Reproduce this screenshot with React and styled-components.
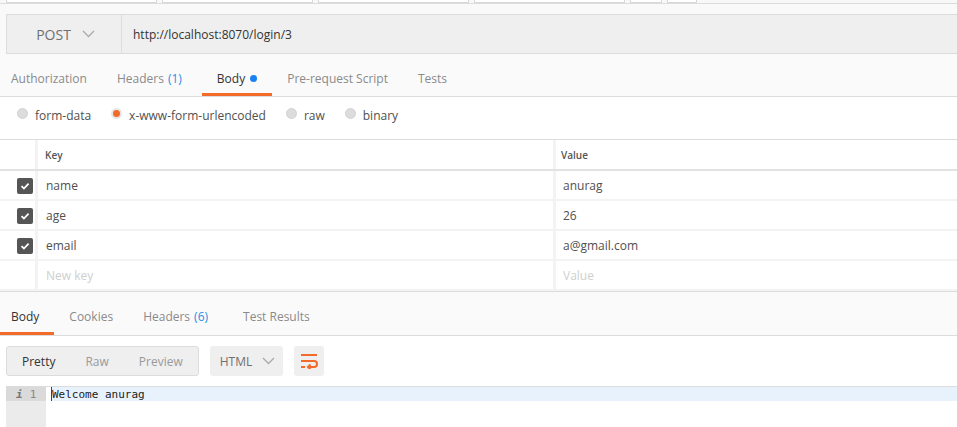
import styled, { createGlobalStyle } from "styled-components";

const GlobalStyle = createGlobalStyle`
  body {
    margin: 0;
    background: #fff;
    font-family: "Open Sans", "Liberation Sans", sans-serif;
  }
`;

const ORANGE = "#f26b2a";

const Page = styled.div`
  width: 957px;
  height: 427px;
  overflow: hidden;
  display: flex;
  flex-direction: column;
`;

const TabStrip = styled.div`
  display: flex;
  gap: 5px;
  padding-left: 6px;
  height: 3px;
  background: #f8f8f8;
  border-bottom: 1px solid #dcdcdc;
`;

const TabStub = styled.div`
  width: ${(p) => p.w}px;
  background: #fff;
  border: 1px solid #d8d8d8;
  border-top: none;
`;

const UrlArea = styled.div`
  background: #f9f9f9;
  padding: 10px 0 0 6px;
`;

const UrlBar = styled.div`
  display: flex;
  height: 38px;
  background: #efefef;
  border: 1px solid #dcdcdc;
  border-right: none;
`;

const Method = styled.div`
  width: 115px;
  display: flex;
  align-items: center;
  justify-content: center;
  gap: 11px;
  border-right: 1px solid #dcdcdc;
  font-size: 14px;
  color: #707070;
  padding-left: 3px;
  box-sizing: border-box;
`;

const UrlText = styled.div`
  display: flex;
  align-items: center;
  padding-left: 11px;
  font-size: 12px;
  color: #333;
`;

const TabRow = styled.div`
  display: flex;
  height: ${(p) => p.h}px;
  background: #fafafa;
  border-bottom: 1px solid #dcdcdc;
  border-top: ${(p) => (p.top ? "1px solid #dcdcdc" : "none")};
`;

const Tab = styled.div`
  display: flex;
  align-items: center;
  gap: 4px;
  padding: 9px 15px 0;
  margin-left: ${(p) => (p.first ? "-4px" : "0")};
  font-size: 12px;
  color: ${(p) => (p.active ? "#333" : "#8a8a8a")};
  border-bottom: 3px solid ${(p) => (p.active ? ORANGE : "transparent")};
`;

const Count = styled.span`
  color: #2b8de3;
  margin-right: 5px;
`;

const Dot = styled.span`
  width: 7px;
  height: 7px;
  border-radius: 50%;
  background: #1a82f0;
  margin-left: 1px;
`;

const RadioRow = styled.div`
  display: flex;
  align-items: center;
  gap: 20px;
  height: 36px;
  padding: 0 0 6px 17px;
  border-bottom: 1px solid #dcdcdc;
`;

const RadioItem = styled.label`
  display: flex;
  align-items: center;
  gap: 7px;
  font-size: 12px;
  color: #505050;
`;

const Radio = styled.span`
  width: 11px;
  height: 11px;
  border-radius: 50%;
  box-sizing: border-box;
  margin-top: -3px;
  background: ${(p) => (p.checked ? ORANGE : "#dcdcdc")};
  border: ${(p) => (p.checked ? "2px solid #e6e6e6" : "1px solid #d2d2d2")};
`;

const Table = styled.div`
  display: flex;
  flex-direction: column;
`;

const Row = styled.div`
  display: grid;
  grid-template-columns: 35px 515px 1fr;
  column-gap: 3px;
  height: ${(p) => (p.header ? 29 : 28)}px;
  background: #f3f3f3;
  border-bottom: ${(p) => (p.header ? "2px solid #e2e2e2" : "2px solid #f3f3f3")};
`;

const Cell = styled.div`
  background: #fff;
  display: flex;
  align-items: center;
  padding: 1px 0 0 ${(p) => p.pad || 0}px;
  font-size: ${(p) => (p.head ? 10 : 12)}px;
  font-weight: ${(p) => (p.head ? 600 : 400)};
  color: ${(p) => (p.ghost ? "#cfcfcf" : p.head ? "#555" : "#505050")};
`;

const Check = styled.span`
  width: 16px;
  height: 16px;
  margin-left: 17px;
  border-radius: 2px;
  background: #555;
  display: flex;
  align-items: center;
  justify-content: center;
`;

const Toolbar = styled.div`
  display: flex;
  gap: 11px;
  padding: 10px 6px;
  height: 30px;
`;

const Group = styled.div`
  display: flex;
  border: 1px solid #dcdcdc;
  border-radius: 3px;
  background: #efefef;
`;

const GroupBtn = styled.div`
  display: flex;
  align-items: center;
  padding: 0 15px;
  font-size: 12px;
  color: ${(p) => (p.active ? "#333" : "#9a9a9a")};
`;

const Select = styled.div`
  display: flex;
  align-items: center;
  gap: 10px;
  padding: 0 8px 0 10px;
  background: #efefef;
  border-radius: 3px;
  font-size: 12px;
  color: #707070;
`;

const IconBtn = styled.div`
  width: 30px;
  display: flex;
  align-items: center;
  justify-content: center;
  background: #efefef;
  border-radius: 3px;
`;

const Code = styled.div`
  display: flex;
  margin-left: 6px;
  border-top: 1px solid #dcdcdc;
  flex: 1;
`;

const Gutter = styled.div`
  width: 40px;
  background: #ebebeb;
`;

const GutterLine = styled.div`
  height: 14px;
  background: #dadada;
  display: flex;
  align-items: center;
  gap: 7px;
  padding-left: 10px;
  font-family: "DejaVu Sans Mono", "Liberation Mono", monospace;
  font-size: 11px;
  color: #888;
`;

const Info = styled.span`
  font-style: italic;
  font-weight: bold;
  color: #777;
`;

const Lines = styled.div`
  flex: 1;
`;

const CodeLine = styled.div`
  height: 14px;
  background: #e8f2fd;
  display: flex;
  align-items: center;
  font-family: "DejaVu Sans Mono", "Liberation Mono", monospace;
  font-size: 11px;
  color: #222;
  border-left: 1px solid #444;
  margin-left: 5px;
`;

function Chevron() {
  return (
    <svg width="13" height="8" viewBox="0 0 13 8">
      <path d="M1 1l5.5 5.5L12 1" stroke="#aaa" strokeWidth="1.3" fill="none" />
    </svg>
  );
}

function Tick() {
  return (
    <svg width="10" height="8" viewBox="0 0 10 8">
      <path d="M1.5 4.2l2.4 2.3L8.6 1.6" stroke="#fff" strokeWidth="1.8" fill="none" />
    </svg>
  );
}

function WrapIcon() {
  return (
    <svg width="18" height="16" viewBox="0 0 18 16">
      <g stroke={ORANGE} strokeWidth="2" fill="none">
        <path d="M1 2h16" />
        <path d="M1 8h13a3 3 0 0 1 0 6H8" />
        <path d="M1 14h4" />
        <path d="M10.5 11.5L8 14l2.5 2.5" />
      </g>
    </svg>
  );
}

const params = [
  ["name", "anurag"],
  ["age", "26"],
  ["email", "a@gmail.com"],
];

export default function App() {
  return (
    <Page>
      <GlobalStyle />
      <TabStrip>
        <TabStub w={149} />
        <TabStub w={149} />
        <TabStub w={149} />
        <TabStub w={149} />
        <TabStub w={30} />
        <TabStub w={28} />
      </TabStrip>
      <UrlArea>
        <UrlBar>
          <Method>
            POST <Chevron />
          </Method>
          <UrlText>http://localhost:8070/login/3</UrlText>
        </UrlBar>
      </UrlArea>
      <TabRow h={42}>
        <Tab first>Authorization</Tab>
        <Tab>
          Headers <Count>(1)</Count>
        </Tab>
        <Tab active>
          Body <Dot />
        </Tab>
        <Tab>Pre-request Script</Tab>
        <Tab>Tests</Tab>
      </TabRow>
      <RadioRow>
        <RadioItem>
          <Radio /> form-data
        </RadioItem>
        <RadioItem>
          <Radio checked /> x-www-form-urlencoded
        </RadioItem>
        <RadioItem>
          <Radio /> raw
        </RadioItem>
        <RadioItem>
          <Radio /> binary
        </RadioItem>
      </RadioRow>
      <Table>
        <Row header>
          <Cell />
          <Cell head pad={7}>Key</Cell>
          <Cell head pad={5}>Value</Cell>
        </Row>
        {params.map(([k, v]) => (
          <Row key={k}>
            <Cell>
              <Check>
                <Tick />
              </Check>
            </Cell>
            <Cell pad={8}>{k}</Cell>
            <Cell pad={7}>{v}</Cell>
          </Row>
        ))}
        <Row>
          <Cell />
          <Cell pad={8} ghost>New key</Cell>
          <Cell pad={7} ghost>Value</Cell>
        </Row>
      </Table>
      <TabRow h={43} top>
        <Tab first active>Body</Tab>
        <Tab>Cookies</Tab>
        <Tab>
          Headers <Count>(6)</Count>
        </Tab>
        <Tab>Test Results</Tab>
      </TabRow>
      <Toolbar>
        <Group>
          <GroupBtn active>Pretty</GroupBtn>
          <GroupBtn>Raw</GroupBtn>
          <GroupBtn>Preview</GroupBtn>
        </Group>
        <Select>
          HTML <Chevron />
        </Select>
        <IconBtn>
          <WrapIcon />
        </IconBtn>
      </Toolbar>
      <Code>
        <Gutter>
          <GutterLine>
            <Info>i</Info>1
          </GutterLine>
        </Gutter>
        <Lines>
          <CodeLine>Welcome anurag</CodeLine>
        </Lines>
      </Code>
    </Page>
  );
}
